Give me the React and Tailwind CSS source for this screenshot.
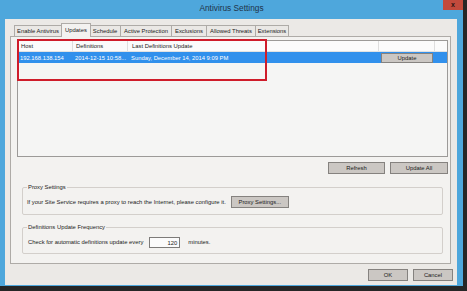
import React from "react";

const tabs = [
  { label: "Enable Antivirus", w: "w-[48px]" },
  { label: "Updates", w: "w-[30px]", active: true },
  { label: "Schedule", w: "w-[31px]" },
  { label: "Active Protection", w: "w-[51px]" },
  { label: "Exclusions", w: "w-[35px]" },
  { label: "Allowed Threats", w: "w-[49px]" },
  { label: "Extensions", w: "w-[33px]" },
];

function Btn({ children, className = "" }) {
  return (
    <div
      className={`flex items-center justify-center border border-[#85827f] bg-[#cbc7c3] text-[#1a1a1a] leading-[8px] ${className}`}
    >
      {children}
    </div>
  );
}

export default function App() {
  return (
    <div className="w-[467px] h-[291px] bg-[#262626] overflow-hidden font-['Liberation_Sans',Arial,sans-serif] text-[5.85px] text-[#1a1a1a]">
      <div className="w-[463px] h-[286px] bg-[#4ea7dc] flex flex-col relative">
        {/* title bar */}
        <div className="h-[19px] flex justify-center pt-[3px]">
          <span className="text-[8.3px] leading-[10px] text-[#1e3349]">Antivirus Settings</span>
        </div>
        <div className="absolute right-0 top-0 w-[20px] h-[10px] bg-[#c24a3c] flex items-center justify-center text-[7px] leading-[8px] font-bold text-[#2a1512]">
          x
        </div>

        {/* client */}
        <div className="flex-1 ml-[5px] mr-[6px] mb-[1px] bg-[#ebe9e6] flex flex-col">
          {/* tab strip */}
          <div className="h-[17px] flex items-end pl-[9px]">
            {tabs.map((t) =>
              t.active ? (
                <div
                  key={t.label}
                  className={`${t.w} h-[14px] -mx-[1px] -mb-[1px] relative z-10 border border-b-0 border-[#aeaba7] bg-[#f3f2f0] flex items-start justify-center pt-[2px] leading-[8px]`}
                >
                  {t.label}
                </div>
              ) : (
                <div
                  key={t.label}
                  className={`${t.w} h-[11px] border border-b-0 border-l-0 first:border-l border-[#aeaba7] bg-[#eae8e5] flex items-center justify-center leading-[8px]`}
                >
                  {t.label}
                </div>
              )
            )}
          </div>

          {/* panel */}
          <div className="ml-[5px] w-[441px] h-[228px] border border-[#aeaba7] bg-[#f3f2f0] flex flex-col">
            {/* listview */}
            <div className="relative ml-[6px] mt-[3px] w-[431px] h-[117px] border border-[#9c9a98] bg-[#f5f5f4] flex flex-col">
              <div className="h-[11px] flex bg-[#fbfbfb] border-b border-[#e2e2e2] leading-[10px]">
                <div className="w-[55px] pl-[3px] border-r border-[#dedede]">Host</div>
                <div className="w-[55px] pl-[3px] border-r border-[#dedede]">Definitions</div>
                <div className="w-[251px] pl-[4px] border-r border-[#dedede]">Last Definitions Update</div>
                <div className="w-[56px] border-r border-[#dedede]"></div>
                <div className="flex-1"></div>
              </div>
              <div className="h-[11px] flex items-center bg-[#3190ec] text-white leading-[10px]">
                <div className="w-[55px] pl-[2px]">192.168.138.154</div>
                <div className="w-[55px] pl-[2px] whitespace-nowrap overflow-hidden">2014-12-15 10:58...</div>
                <div className="w-[251px] pl-[3px]">Sunday, December 14, 2014 9:09 PM</div>
                <div className="w-[56px] pl-[2px] flex items-center">
                  <Btn className="w-[52px] h-[10px] bg-[#c9c6c3]">Update</Btn>
                </div>
                <div className="flex-1"></div>
              </div>
              <div className="absolute -left-[1px] -top-[2px] w-[250px] h-[42px] border-2 border-[#cf1c2a]"></div>
            </div>

            {/* refresh / update all */}
            <div className="ml-[6px] w-[431px] mt-[5px] flex justify-end gap-[5px]">
              <Btn className="w-[57px] h-[12px]">Refresh</Btn>
              <Btn className="w-[58px] h-[12px]">Update All</Btn>
            </div>

            {/* proxy settings */}
            <div className="relative ml-[11px] mt-[13px] w-[421px] h-[28px] border border-[#d3cfcb] rounded-[2px] flex items-end pb-[6px] pl-[4px]">
              <span className="absolute left-[4px] -top-[5px] px-[1px] bg-[#f3f2f0] leading-[8px]">Proxy Settings</span>
              <span className="leading-[12px]">If your Site Service requires a proxy to reach the Internet, please configure it.</span>
              <Btn className="ml-[5px] w-[58px] h-[12px]">Proxy Settings...</Btn>
            </div>

            {/* definitions update frequency */}
            <div className="relative ml-[11px] mt-[12px] w-[421px] h-[27px] border border-[#d3cfcb] rounded-[2px] flex items-end pb-[5px] pl-[5px]">
              <span className="absolute left-[4px] -top-[5px] px-[1px] bg-[#f3f2f0] leading-[8px]">Definitions Update Frequency</span>
              <span className="leading-[11px]">Check for automatic definitions update every</span>
              <div className="ml-[6px] w-[31px] h-[11px] border border-[#7d7b79] bg-[#fbfbfb] flex items-center justify-end pr-[2px] leading-[8px]">
                120
              </div>
              <span className="ml-[8px] leading-[11px]">minutes.</span>
            </div>
          </div>

          {/* OK / Cancel */}
          <div className="mt-[5px] mr-[4px] flex justify-end gap-[5px]">
            <Btn className="w-[40px] h-[12px]">OK</Btn>
            <Btn className="w-[40px] h-[12px]">Cancel</Btn>
          </div>
        </div>
      </div>
    </div>
  );
}
